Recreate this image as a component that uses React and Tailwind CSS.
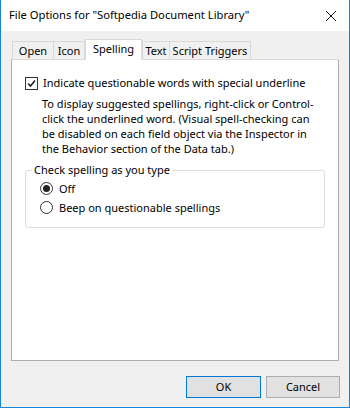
export default function App() {
  const tabs = [
    { label: "Open", cls: "w-[42px]" },
    { label: "Icon", cls: "w-[32px] -ml-px" },
    { label: "Spelling", cls: "w-[57px]", active: true },
    { label: "Text", cls: "w-[28px]" },
    { label: "Script Triggers", cls: "w-[82px] -ml-px" },
  ];

  return (
    <div
      className="w-[350px] h-[408px] flex flex-col bg-[#f0f0f0] border border-t-0 border-[#1883d7] text-[11px] text-black"
      style={{ fontFamily: '"Noto Sans", "Open Sans", sans-serif' }}
    >
      {/* title bar */}
      <div className="h-[31px] bg-white flex items-center justify-between pl-[8px] pr-[9px] shrink-0">
        <span className="text-[11.2px]">File Options for "Softpedia Document Library"</span>
        <svg width="12" height="12" viewBox="0 0 12 12" className="mr-[3px]">
          <path d="M1 1 L11 11 M11 1 L1 11" stroke="#111" strokeWidth="1" />
        </svg>
      </div>

      {/* tabs */}
      <div className="flex items-end pl-[11px] pt-[9px] h-[28px] shrink-0">
        {tabs.map((t) =>
          t.active ? (
            <div
              key={t.label}
              className={`${t.cls} h-[21px] -mb-px text-center bg-white border border-b-0 border-[#d9d9d9] relative z-10 leading-[17px]`}
            >
              {t.label}
            </div>
          ) : (
            <div
              key={t.label}
              className={`${t.cls} h-[18px] text-center bg-[#f0f0f0] border border-b-0 border-[#d9d9d9] leading-[17px]`}
            >
              {t.label}
            </div>
          )
        )}
      </div>

      {/* panel */}
      <div className="mx-[10px] h-[302px] bg-white border border-[#d9d9d9] border-r-[#adadad] border-b-[#adadad] border-l-[#adadad] pt-[15px] px-[13px]">
        <div className="flex items-center gap-[5px]">
          <div className="w-[13px] h-[13px] border border-[#333] flex items-center justify-center">
            <svg width="11" height="11" viewBox="0 0 11 11">
              <path d="M2 5.5 L4.5 8 L9 2.5" stroke="#222" strokeWidth="1.6" fill="none" />
            </svg>
          </div>
          <span>Indicate questionable words with special underline</span>
        </div>
        <p className="ml-[17px] mt-[4px] leading-[15px] pr-[2px]">
          To display suggested spellings, right-click or Control-click the underlined word. (Visual spell-checking can be disabled on each field object via the Inspector in the Behavior section of the Data tab.)
        </p>

        <div className="relative mt-[14px] border border-[#dcdcdc] rounded-[3px] h-[58px] pt-[10px] pl-[14px] flex flex-col gap-[4px]">
          <span className="absolute -top-[9px] left-[6px] bg-white px-[2px] leading-[16px]">Check spelling as you type</span>
          <label className="flex items-center gap-[6px] leading-[15px]">
            <span className="w-[13px] h-[13px] rounded-full border border-[#333] flex items-center justify-center">
              <span className="w-[7px] h-[7px] rounded-full bg-[#222]" />
            </span>
            Off
          </label>
          <label className="flex items-center gap-[6px] leading-[15px]">
            <span className="w-[13px] h-[13px] rounded-full border border-[#333]" />
            Beep on questionable spellings
          </label>
        </div>
      </div>

      {/* buttons */}
      <div className="flex justify-end gap-[5px] pr-[9px] mt-[15px]">
        <button className="w-[75px] h-[22px] bg-[#e1e1e1] border border-[#0078d7]">OK</button>
        <button className="w-[74px] h-[22px] bg-[#e1e1e1] border border-[#adadad]">Cancel</button>
      </div>
    </div>
  );
}
